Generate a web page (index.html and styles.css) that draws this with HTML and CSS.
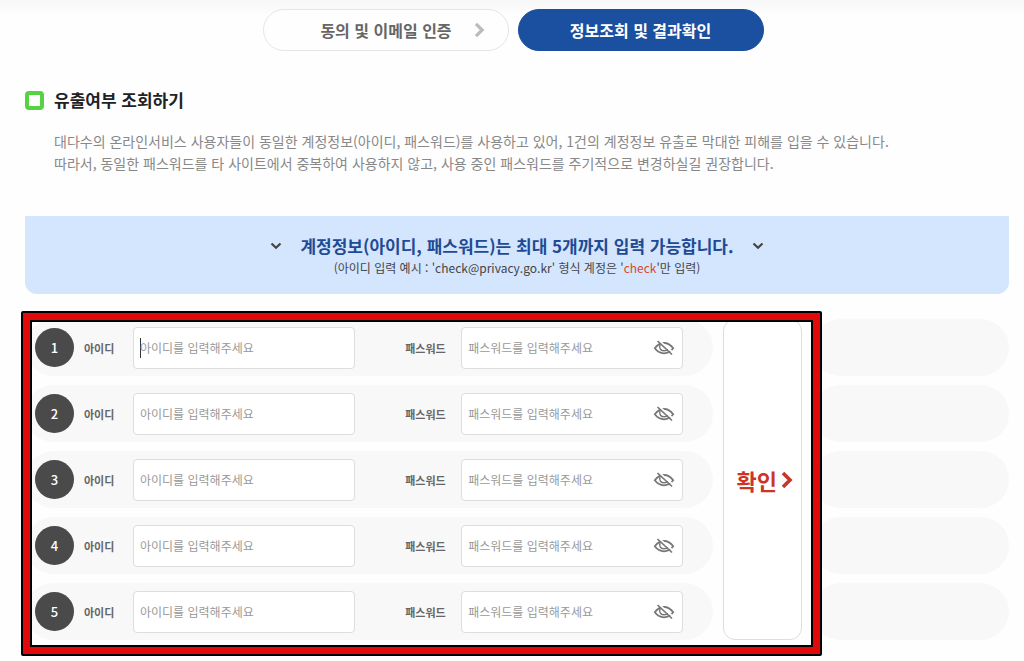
FILE: index.html
```html
<!DOCTYPE html>
<html lang="ko">
<head>
<meta charset="utf-8">
<meta name="viewport" content="width=device-width, initial-scale=1">
<title>유출여부 조회하기</title>
<link rel="stylesheet" href="styles.css">
</head>
<body>
<svg class="defs" aria-hidden="true">
  <symbol id="eye-off" viewBox="0 0 22 18">
    <path d="M1.800 9.300C4.500 5.500 7.500 4 11 4s6.500 1.500 9.200 5.300c-2.700 3.600-5.700 5-9.200 5s-6.500-1.400-9.200-5z" fill="none" stroke="currentColor" stroke-width="1.800"/>
    <path d="M7 6c-1.200 3.500 1 5.800 4.200 5.800 1.800 0 3-.6 3.600-1.800" fill="none" stroke="currentColor" stroke-width="1.500"/>
    <path d="M6.500 2l14 12" fill="none" stroke="#fff" stroke-width="1.800"/>
    <path d="M4.500 2l14.500 13.500" fill="none" stroke="currentColor" stroke-width="1.700"/>
  </symbol>
  <symbol id="down" viewBox="0 0 12 8">
    <path d="M1.500 1.500L6 5.800l4.500-4.300" fill="none" stroke="currentColor" stroke-width="2.200"/>
  </symbol>
  <symbol id="right" viewBox="0 0 12 18">
    <path d="M2 2l7 7-7 7" fill="none" stroke="currentColor" stroke-width="3.600"/>
  </symbol>
</svg>
<main class="page">
  <nav class="steps">
    <a class="step" href="#agree">동의 및 이메일 인증 <svg class="step-arrow"><use href="#right"/></svg></a>
    <a class="step step-current" href="#result" aria-current="step">정보조회 및 결과확인</a>
  </nav>

  <section class="intro">
    <h1 class="title">유출여부 조회하기</h1>
    <p class="description">대다수의 온라인서비스 사용자들이 동일한 계정정보(아이디, 패스워드)를 사용하고 있어, 1건의 계정정보 유출로 막대한 피해를 입을 수 있습니다.<br>따라서, 동일한 패스워드를 타 사이트에서 중복하여 사용하지 않고, 사용 중인 패스워드를 주기적으로 변경하실길 권장합니다.</p>
  </section>

  <section class="notice">
    <h2 class="notice-title"><svg class="down"><use href="#down"/></svg>계정정보(아이디, 패스워드)는 최대 5개까지 입력 가능합니다.<svg class="down"><use href="#down"/></svg></h2>
    <p class="notice-text">(아이디 입력 예시 : 'check@privacy.go.kr' 형식 계정은 '<span class="accent">check</span>'만 입력)</p>
  </section>

  <form class="accounts">
    <div class="rows">
      <div class="row">
        <span class="number">1</span>
        <label class="label" for="id1">아이디</label>
        <div class="field"><input class="input input-active" id="id1" type="text" placeholder="아이디를 입력해주세요"></div>
        <label class="label label-password" for="pw1">패스워드</label>
        <div class="field"><input class="input" id="pw1" type="password" placeholder="패스워드를 입력해주세요"><button class="reveal" type="button" aria-label="패스워드 보기"><svg class="eye"><use href="#eye-off"/></svg></button></div>
      </div>
      <div class="row">
        <span class="number">2</span>
        <label class="label" for="id2">아이디</label>
        <div class="field"><input class="input" id="id2" type="text" placeholder="아이디를 입력해주세요"></div>
        <label class="label label-password" for="pw2">패스워드</label>
        <div class="field"><input class="input" id="pw2" type="password" placeholder="패스워드를 입력해주세요"><button class="reveal" type="button" aria-label="패스워드 보기"><svg class="eye"><use href="#eye-off"/></svg></button></div>
      </div>
      <div class="row">
        <span class="number">3</span>
        <label class="label" for="id3">아이디</label>
        <div class="field"><input class="input" id="id3" type="text" placeholder="아이디를 입력해주세요"></div>
        <label class="label label-password" for="pw3">패스워드</label>
        <div class="field"><input class="input" id="pw3" type="password" placeholder="패스워드를 입력해주세요"><button class="reveal" type="button" aria-label="패스워드 보기"><svg class="eye"><use href="#eye-off"/></svg></button></div>
      </div>
      <div class="row">
        <span class="number">4</span>
        <label class="label" for="id4">아이디</label>
        <div class="field"><input class="input" id="id4" type="text" placeholder="아이디를 입력해주세요"></div>
        <label class="label label-password" for="pw4">패스워드</label>
        <div class="field"><input class="input" id="pw4" type="password" placeholder="패스워드를 입력해주세요"><button class="reveal" type="button" aria-label="패스워드 보기"><svg class="eye"><use href="#eye-off"/></svg></button></div>
      </div>
      <div class="row">
        <span class="number">5</span>
        <label class="label" for="id5">아이디</label>
        <div class="field"><input class="input" id="id5" type="text" placeholder="아이디를 입력해주세요"></div>
        <label class="label label-password" for="pw5">패스워드</label>
        <div class="field"><input class="input" id="pw5" type="password" placeholder="패스워드를 입력해주세요"><button class="reveal" type="button" aria-label="패스워드 보기"><svg class="eye"><use href="#eye-off"/></svg></button></div>
      </div>
    </div>
    <button class="submit" type="submit">확인<svg class="submit-arrow"><use href="#right"/></svg></button>
    <div class="results">
      <div class="result"></div>
      <div class="result"></div>
      <div class="result"></div>
      <div class="result"></div>
      <div class="result"></div>
    </div>
    <div class="highlight"></div>
  </form>
</main>
</body>
</html>
```

FILE: styles.css
```css
*,
*::before {
  box-sizing: border-box;
}

body {
  margin: 0;
  background: #fefefe linear-gradient(#f7f7f7, #fefefe) no-repeat 0 0 / 100% 16px;
  color: #222;
  font-family: "Noto Sans CJK KR", "Noto Sans", sans-serif;
}

h1,
h2,
p {
  margin: 0;
}

input,
button {
  font-family: inherit;
}

.defs {
  display: block;
  width: 0;
  height: 0;
}

.page {
  padding: 9px 15px 21px 25px;
}

.steps {
  display: flex;
  justify-content: center;
  gap: 9px;
  padding-right: 8px;
}

.step {
  display: flex;
  align-items: center;
  justify-content: center;
  gap: 22px;
  width: 246px;
  height: 42px;
  border: 1px solid #e6e6e6;
  border-radius: 21px;
  background: #fefefe;
  color: #666;
  font-size: 16px;
  font-weight: 700;
  text-decoration: none;
}

.step:first-child {
  padding-left: 34px;
}

.step-current {
  border-color: #1b4f9f;
  background: #1b4f9f;
  color: #fff;
}

.step-arrow {
  width: 11px;
  height: 16px;
  color: #bbb;
}

.intro {
  padding: 36px 0 42px;
}

.title {
  display: flex;
  align-items: center;
  gap: 10px;
  font-size: 17px;
  font-weight: 700;
  line-height: 26px;
}

.title::before {
  content: "";
  width: 19px;
  height: 19px;
  border: 4px solid #55d442;
  border-radius: 4px;
}

.description {
  padding: 17px 0 0 29px;
  color: #888;
  font-size: 14px;
  line-height: 22px;
}

.notice {
  padding: 17px 0 16px;
  border-radius: 0 0 12px 12px;
  background: #d4e5fe;
  text-align: center;
}

.notice-title {
  display: flex;
  align-items: center;
  justify-content: center;
  gap: 18px;
  color: #1f4b94;
  font-size: 17px;
  font-weight: 700;
  line-height: 25px;
}

.down {
  width: 12px;
  height: 8px;
  color: #444;
}

.notice-text {
  color: #444;
  font-size: 12px;
  line-height: 20px;
}

.accent {
  color: #d9482f;
}

.accounts {
  display: grid;
  grid-template-columns: 7fr 79px 2fr;
  column-gap: 10px;
  padding-top: 25px;
}

.rows,
.results {
  display: grid;
  grid-row: 1;
  grid-column: 1;
  gap: 9px;
}

.results {
  grid-column: 3;
}

.row,
.result {
  height: 57px;
  border-radius: 29px;
  background: #f8f8f8;
}

.row {
  display: grid;
  grid-template-columns: 39px 59px 1fr 106px 1fr;
  align-items: center;
  padding: 0 30px 0 10px;
}

.number {
  border-radius: 50%;
  background: #4a4a4a;
  color: #fff;
  font-size: 13px;
  font-weight: 500;
  line-height: 39px;
  text-align: center;
}

.label {
  padding-left: 10px;
  color: #666;
  font-size: 11px;
  font-weight: 700;
}

.label-password {
  padding-left: 50px;
}

.field {
  display: flex;
  height: 42px;
  border: 1px solid #ddd;
  border-radius: 4px;
  background: #fff;
}

.input {
  flex: 1;
  min-width: 0;
  padding: 0 6px;
  border: 0;
  background: none;
  color: #333;
  font-size: 12px;
}

.input::placeholder {
  color: #999;
}

.input-active {
  background: linear-gradient(#333, #333) no-repeat 6px 50% / 1px 20px;
}

.reveal {
  display: flex;
  align-items: center;
  padding: 0 7px;
  border: 0;
  background: none;
  color: #777;
}

.eye {
  width: 22px;
  height: 18px;
}

.submit {
  display: flex;
  grid-row: 1;
  grid-column: 2;
  align-items: center;
  justify-content: center;
  gap: 4px;
  padding: 0 0 0 4px;
  border: 1px solid #ddd;
  border-radius: 12px;
  background: #fff;
  color: #cb3527;
  font-size: 22px;
  font-weight: 700;
}

.submit-arrow {
  width: 12px;
  height: 18px;
}

.highlight {
  z-index: 1;
  grid-row: 1;
  grid-column: 1 / 3;
  margin: -8px -20px -16px -4px;
  border: 2px solid #000;
  border-radius: 2px;
  box-shadow: inset 0 0 0 7px #e00a0a, inset 0 0 0 9px #000;
  pointer-events: none;
}
```
